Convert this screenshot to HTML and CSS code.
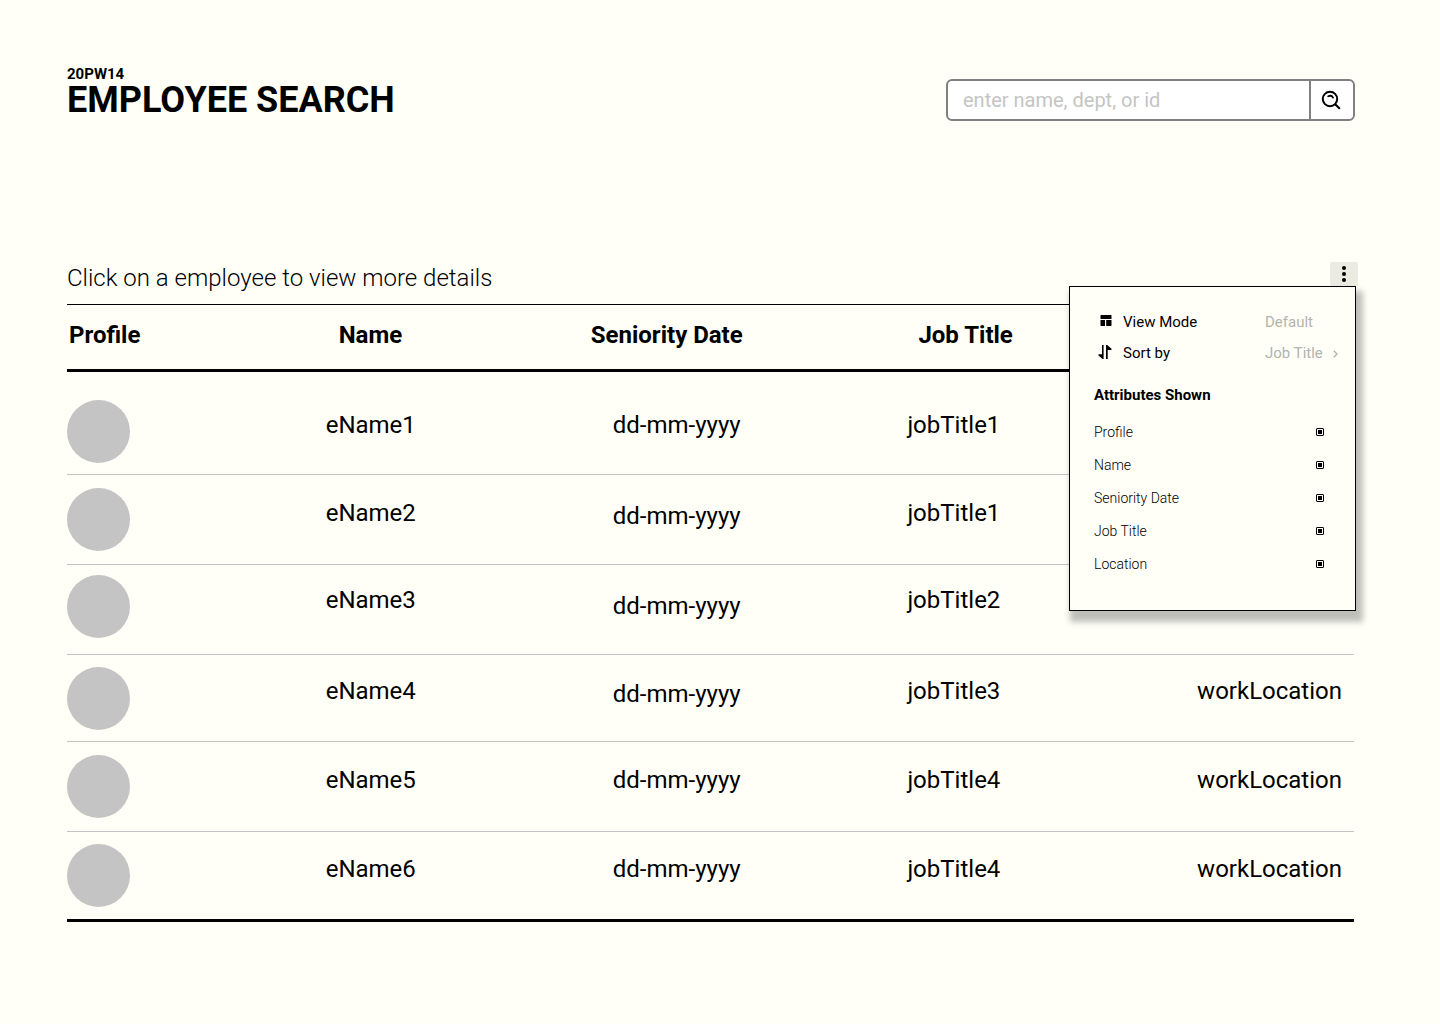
FILE: index.html
```html
<!DOCTYPE html>
<html lang="en">
<head>
<meta charset="utf-8">
<meta name="viewport" content="width=device-width, initial-scale=1">
<title>Employee Search</title>
<link rel="stylesheet" href="styles.css">
</head>
<body>
<div class="page">
  <header class="header">
    <div class="brand">
      <p class="code">20PW14</p>
      <h1 class="title">EMPLOYEE SEARCH</h1>
    </div>
    <form class="search" role="search">
      <input class="search-input" type="search" name="q" placeholder="enter name, dept, or id" aria-label="Search employees">
      <button class="search-button" type="button" aria-label="Search">
        <svg width="20" height="20" viewBox="0 0 20 20" fill="none" stroke="#000" stroke-width="2" stroke-linecap="round" stroke-linejoin="round"><circle cx="9" cy="9" r="7.2"/><path d="M14.5 14.5L18.3 18.3"/><path d="M7.2 6.300C9.400 5.3 11.2 6 12 7.600" stroke-width="1.8"/></svg>
      </button>
    </form>
  </header>

  <main>
    <div class="toolbar">
      <p class="hint">Click on a employee to view more details</p>
      <div class="options">
        <button class="options-button" type="button" aria-label="Table options" aria-expanded="true">
          <svg width="4" height="16" viewBox="0 0 4 16"><circle cx="2" cy="2" r="2"/><circle cx="2" cy="8" r="2"/><circle cx="2" cy="14" r="2"/></svg>
        </button>
        <section class="menu" aria-label="Table options">
          <div class="setting">
            <svg class="setting-icon" width="12" height="14" viewBox="0 0 12 14"><path d="M1 0h10l.5.5V4H.5V.5zM.5 5H5v6H1l-.5-.5zM6.200 5h5.300v5.500l-.5.5H6.200z"/></svg>
            <span class="setting-name">View Mode</span>
            <button class="setting-value" type="button">Default</button>
          </div>
          <div class="setting">
            <svg class="setting-icon" width="14" height="16" viewBox="0 0 14 16"><path d="M4 0h1.600v14H4.600L.5 10.500V9.300H4zM8 0h1.200l4.300 3.800v1.100H9.700V14H8z"/></svg>
            <span class="setting-name">Sort by</span>
            <button class="setting-value" type="button">Job Title <svg class="chevron" width="5" height="8" viewBox="0 0 5 8" fill="none" stroke="#b3b3ae" stroke-width="1.400"><path d="M.8.8L4 4 .8 7.200"/></svg></button>
          </div>
          <h2 class="menu-title">Attributes Shown</h2>
          <label class="attribute">Profile<input type="checkbox" checked></label>
          <label class="attribute">Name<input type="checkbox" checked></label>
          <label class="attribute">Seniority Date<input type="checkbox" checked></label>
          <label class="attribute">Job Title<input type="checkbox" checked></label>
          <label class="attribute">Location<input type="checkbox" checked></label>
        </section>
      </div>
    </div>

    <table class="employees">
      <colgroup><col class="col-profile"><col class="col-name"><col class="col-date"><col class="col-job"><col></colgroup>
      <thead>
        <tr><th class="profile">Profile</th><th class="name">Name</th><th class="date">Seniority Date</th><th class="job">Job Title</th><th class="location">Location</th></tr>
      </thead>
      <tbody>
        <tr class="first"><td class="profile"><div class="avatar"></div></td><td>eName1</td><td class="date">dd-mm-yyyy</td><td>jobTitle1</td><td class="location">workLocation</td></tr>
        <tr class="low-date"><td class="profile"><div class="avatar"></div></td><td>eName2</td><td class="date">dd-mm-yyyy</td><td>jobTitle1</td><td class="location">workLocation</td></tr>
        <tr class="low-date raised"><td class="profile"><div class="avatar"></div></td><td>eName3</td><td class="date">dd-mm-yyyy</td><td>jobTitle2</td><td class="location">workLocation</td></tr>
        <tr class="low-date compact"><td class="profile"><div class="avatar"></div></td><td>eName4</td><td class="date">dd-mm-yyyy</td><td>jobTitle3</td><td class="location">workLocation</td></tr>
        <tr><td class="profile"><div class="avatar"></div></td><td>eName5</td><td class="date">dd-mm-yyyy</td><td>jobTitle4</td><td class="location">workLocation</td></tr>
        <tr class="last"><td class="profile"><div class="avatar"></div></td><td>eName6</td><td class="date">dd-mm-yyyy</td><td>jobTitle4</td><td class="location">workLocation</td></tr>
      </tbody>
    </table>
  </main>
</div>
</body>
</html>
```
FILE: styles.css
```css
* {
  box-sizing: border-box;
}

body {
  margin: 0;
  background: #fffff8;
  color: #000;
  font-family: Roboto, "Liberation Sans", sans-serif;
  font-size: 24px;
  line-height: 28px;
}

p, h1, h2 {
  margin: 0;
}

button, input {
  font: inherit;
  color: inherit;
  margin: 0;
}

button {
  padding: 0;
  border: 0;
  background: none;
  cursor: pointer;
}

.page {
  padding: 66px 86px 64px 67px;
}

.header {
  display: flex;
  justify-content: space-between;
  align-items: flex-start;
}

.code {
  font-size: 15px;
  line-height: 16px;
  font-weight: 700;
}

.title {
  font-size: 36px;
  line-height: 36px;
  font-weight: 700;
}

.search {
  display: flex;
  width: 409px;
  height: 42px;
  margin: 13px -1px 0 0;
  border: 2px solid #808080;
  border-radius: 6px;
  background: #fff;
}

.search-input {
  flex: 1;
  min-width: 0;
  padding: 0 15px;
  border: 0;
  background: none;
  font-size: 20px;
  outline: 0;
}

.search-input::placeholder {
  color: #c4c4c4;
  opacity: 1;
}

.search-button {
  display: grid;
  place-items: center;
  width: 44px;
  padding-right: 2px;
  border-left: 2px solid #808080;
}

.toolbar {
  display: flex;
  justify-content: space-between;
  align-items: flex-start;
  height: 42px;
  margin-top: 141px;
}

.hint {
  padding-top: 2px;
  font-weight: 300;
}

.options {
  position: relative;
}

.options-button {
  display: flex;
  justify-content: center;
  width: 28px;
  height: 24px;
  margin-right: -4px;
  padding-top: 4px;
  border-radius: 2px;
  background: #ebebe2;
}

.menu {
  position: absolute;
  top: 24px;
  right: -2px;
  width: 287px;
  padding: 19px 15px 30px 24px;
  border: 1px solid #000;
  background: #fffff8;
  box-shadow: 4px 8px 6px 3px rgba(0, 0, 0, 0.25);
  font-size: 14px;
  line-height: 16px;
}

.setting {
  display: grid;
  grid-template-columns: 20px 1fr 75px;
  column-gap: 9px;
  align-items: center;
  height: 31px;
  font-size: 15px;
}

.setting-icon {
  justify-self: end;
  margin-right: 2px;
}

.setting-value {
  color: #b3b3ae;
  text-align: left;
}

.chevron {
  margin-left: 6px;
}

.menu-title {
  margin: 19px 0 12px;
  font-size: 15px;
  line-height: 16px;
  font-weight: 700;
}

.attribute {
  display: flex;
  justify-content: space-between;
  align-items: center;
  height: 33px;
  padding-right: 16px;
  font-weight: 300;
}

.attribute input {
  display: grid;
  place-items: center;
  width: 8px;
  height: 8px;
  appearance: none;
  border: 1px solid #000;
  border-radius: 1px;
}

.attribute input:checked::before {
  content: "";
  width: 4px;
  height: 4px;
  background: #000;
}

.employees {
  width: 100%;
  table-layout: fixed;
  border-spacing: 0;
  border-top: 1px solid #000;
}

.col-profile {
  width: 20.1%;
}

.col-name {
  width: 20.6%;
}

.col-date {
  width: 24.6%;
}

.col-job {
  width: 18%;
}

th {
  height: 67px;
  padding: 0 0 4px;
  border-bottom: 3px solid #000;
  font-weight: 700;
  text-align: left;
}

th.profile {
  padding-left: 2px;
}

th.name {
  padding-left: 13px;
}

th.job {
  padding-left: 11px;
}

td {
  height: 90px;
  padding: 0 0 14px;
  border-bottom: 1px solid #c4c4c4;
}

td.profile {
  padding-bottom: 0;
}

td.date {
  padding-left: 22px;
}

.location {
  padding-right: 12px;
  text-align: right;
}

.avatar {
  width: 63px;
  height: 63px;
  border-radius: 50%;
  background: #c4c4c4;
}

.first td {
  height: 103px;
  padding-top: 17px;
}

.low-date .date {
  padding-bottom: 8px;
}

.raised td:not(.date) {
  padding-bottom: 20px;
}

.raised td.profile {
  padding-bottom: 6px;
}

.compact td {
  height: 87px;
}

.last td {
  border-bottom: 3px solid #000;
}
```
